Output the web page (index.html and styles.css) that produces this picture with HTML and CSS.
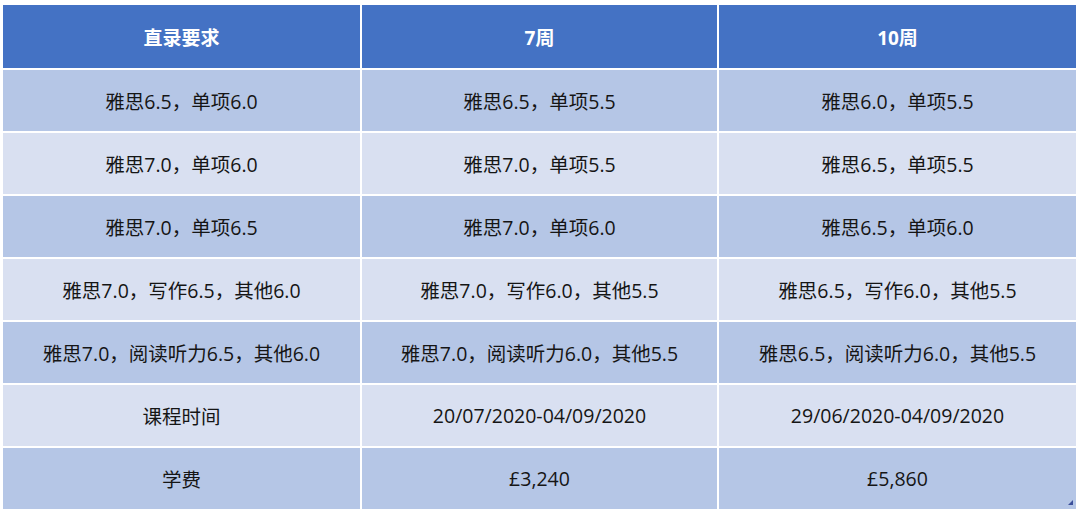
FILE: index.html
```html
<!DOCTYPE html>
<html lang="zh-CN">
<head>
<meta charset="utf-8">
<title>课程表</title>
<link rel="stylesheet" href="styles.css">
</head>
<body>
<div class="sheet">
  <div class="grid">
    <div class="cell head">直录要求</div>
    <div class="cell head">7周</div>
    <div class="cell head">10周</div>

    <div class="cell b1">雅思6.5，单项6.0</div>
    <div class="cell b1">雅思6.5，单项5.5</div>
    <div class="cell b1">雅思6.0，单项5.5</div>

    <div class="cell b2">雅思7.0，单项6.0</div>
    <div class="cell b2">雅思7.0，单项5.5</div>
    <div class="cell b2">雅思6.5，单项5.5</div>

    <div class="cell b1">雅思7.0，单项6.5</div>
    <div class="cell b1">雅思7.0，单项6.0</div>
    <div class="cell b1">雅思6.5，单项6.0</div>

    <div class="cell b2">雅思7.0，写作6.5，其他6.0</div>
    <div class="cell b2">雅思7.0，写作6.0，其他5.5</div>
    <div class="cell b2">雅思6.5，写作6.0，其他5.5</div>

    <div class="cell b1">雅思7.0，阅读听力6.5，其他6.0</div>
    <div class="cell b1">雅思7.0，阅读听力6.0，其他5.5</div>
    <div class="cell b1">雅思6.5，阅读听力6.0，其他5.5</div>

    <div class="cell b2">课程时间</div>
    <div class="cell b2">20/07/2020-04/09/2020</div>
    <div class="cell b2">29/06/2020-04/09/2020</div>

    <div class="cell b1">学费</div>
    <div class="cell b1">£3,240</div>
    <div class="cell b1 last">£5,860<span class="handle"></span></div>
  </div>
</div>
</body>
</html>
```

FILE: styles.css
```css
html, body {
  margin: 0;
  padding: 0;
  background: #ffffff;
}
body {
  width: 1080px;
  height: 516px;
  overflow: hidden;
  font-family: "Open Sans", "Noto Sans CJK SC", sans-serif;
}
.sheet {
  padding: 5px 0 0 3px;
}
.grid {
  display: grid;
  grid-template-columns: 357px 355px 357px;
  grid-template-rows: 63px repeat(7, 61px);
  gap: 2px;
  width: 1073px;
}
.cell {
  display: flex;
  align-items: center;
  justify-content: center;
  font-size: 19.5px;
  color: #151515;
  letter-spacing: 0;
}
.head {
  background: #4472c4;
  color: #ffffff;
  font-weight: 700;
  font-size: 19px;
}
.b1 {
  background: #b5c6e6;
}
.b2 {
  background: #d9e0f1;
}
.last {
  position: relative;
}
.handle {
  position: absolute;
  right: 3px;
  bottom: 4px;
  width: 5px;
  height: 5px;
  background: #3c4f9a;
  clip-path: polygon(100% 0, 100% 100%, 0 100%);
}
```
